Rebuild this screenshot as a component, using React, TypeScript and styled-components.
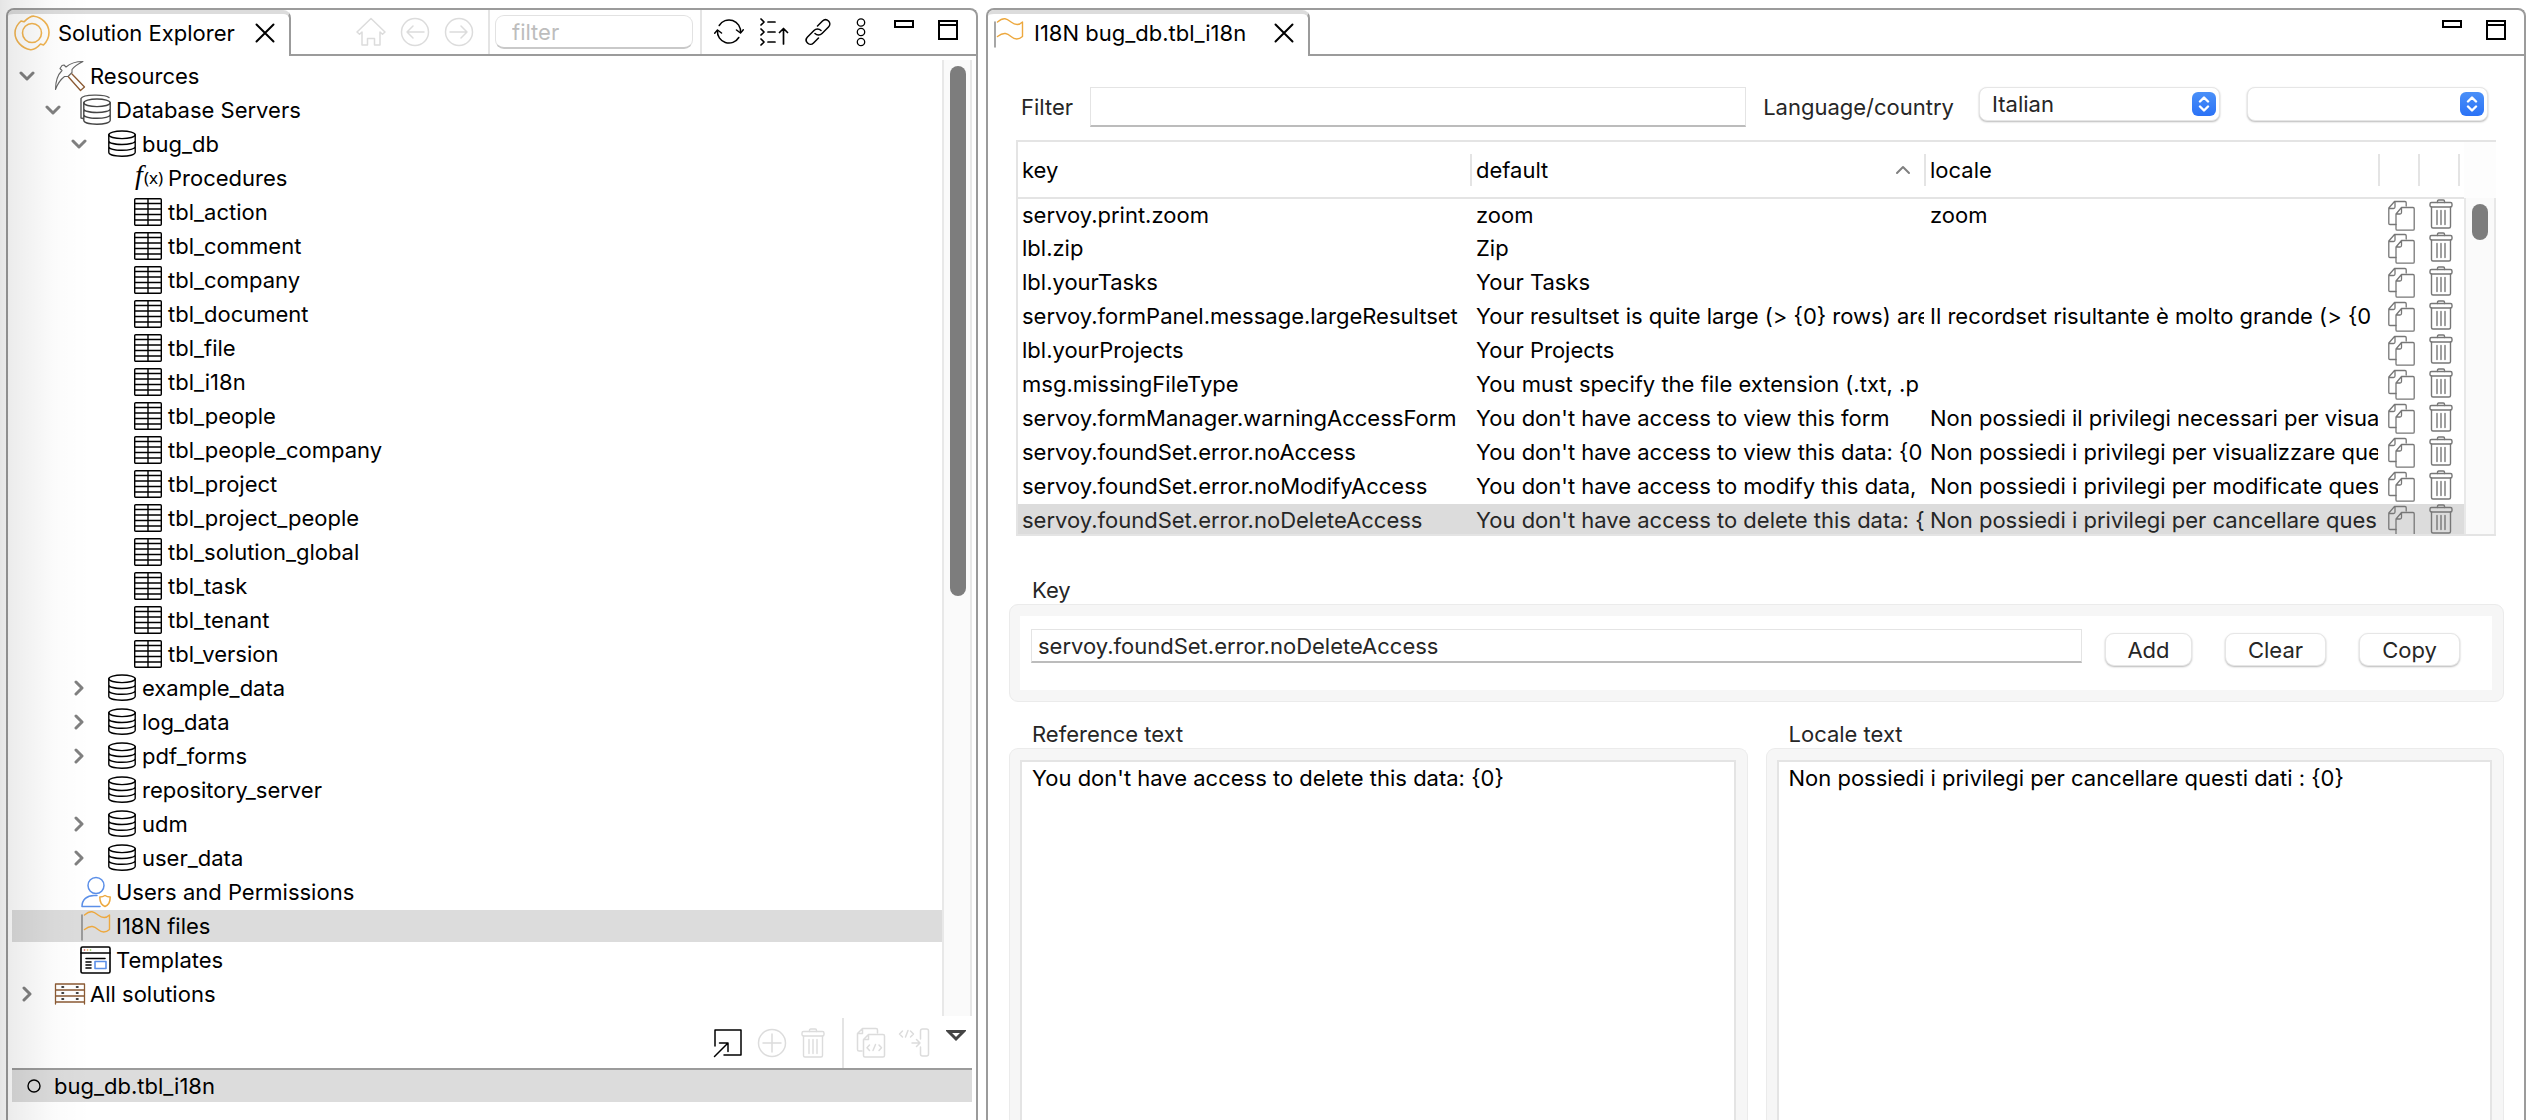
import React from "react";
import styled, { createGlobalStyle } from "styled-components";

const GlobalStyle = createGlobalStyle`
  *, *::before, *::after { box-sizing: border-box; }
  html, body { margin: 0; padding: 0; }
  body {
    background: #fff;
    color: #000;
    font: 400 22px/32px Inter, "Liberation Sans", sans-serif;
    overflow: hidden;
  }
  button, input, select, textarea { font: inherit; color: inherit; margin: 0; }
  button { padding: 0; border: 0; background: none; cursor: pointer; }
  svg { display: block; flex: none; }
`;

/* ---------- workbench frame ---------- */

const Workbench = styled.div`
  position: relative;
  height: 100vh;
  padding: 8px 4px 0 6px;
  display: grid;
  grid-template-columns: minmax(0, 972fr) minmax(0, 1540fr);
  gap: 8px;
`;

const EdgeShade = styled.div`
  position: absolute;
  inset: 0 auto 0 0;
  width: 90px;
  pointer-events: none;
  background: linear-gradient(to right, rgba(0, 0, 0, 0.1), rgba(0, 0, 0, 0.07) 14%, rgba(0, 0, 0, 0.015) 60%, rgba(0, 0, 0, 0));
`;

const View = styled.section`
  display: flex;
  flex-direction: column;
  min-width: 0;
  min-height: 0;
  border: 2px solid #9b9b9b;
  border-bottom: 0;
  border-radius: 8px 8px 0 0;
  background: #fff;
`;

const ViewHeader = styled.header`
  display: flex;
  flex: none;
  height: 46px;
`;

const Tab = styled.div<{ $gap: number }>`
  display: flex;
  align-items: center;
  gap: ${(p) => p.$gap}px;
  padding: 0 14px 5px 6px;
  border-top: 4px solid #dcdcdc;
  border-right: 2px solid #9b9b9b;
  border-radius: 6px 8px 0 0;
  white-space: nowrap;
`;

const TabClose = styled.button<{ $space: number }>`
  margin-left: ${(p) => p.$space}px;
`;

const HeaderTools = styled.div`
  flex: 1;
  display: flex;
  justify-content: flex-end;
  align-items: center;
  min-width: 0;
  border-bottom: 2px solid #9b9b9b;
`;

const ToolGroup = styled.div<{ $gap: number; $pad: string }>`
  display: flex;
  align-items: center;
  gap: ${(p) => p.$gap}px;
  padding: ${(p) => p.$pad};
`;

const Separator = styled.span`
  width: 2px;
  align-self: stretch;
  background: #e4e4e4;
`;

const SearchField = styled.input`
  width: 198px;
  height: 34px;
  margin: 0 7px 0 5px;
  padding: 0 16px;
  border: 1px solid #e2e2e2;
  border-bottom: 2px solid #c9c9c9;
  border-radius: 9px;
  background: #fff;
  outline: none;
  &::placeholder { color: #bdbdbd; opacity: 1; }
`;

const WindowButtons = styled.div`
  display: flex;
  align-items: flex-start;
  gap: 24px;
  height: 24px;
  padding-right: 18px;
`;

/* ---------- tree ---------- */

const TreeArea = styled.div`
  display: flex;
  flex: 1;
  min-height: 0;
  padding: 4px 4px 0 4px;
`;

const TreeList = styled.ul`
  flex: 1;
  min-width: 0;
  margin: 0;
  padding: 0;
  list-style: none;
`;

const TreeRow = styled.li<{ $depth: number; $selected?: boolean }>`
  display: flex;
  align-items: center;
  height: 32px;
  margin-bottom: 2px;
  padding-left: ${(p) => p.$depth * 26}px;
  background: ${(p) => (p.$selected ? "#dcdcdc" : "transparent")};
  white-space: nowrap;
`;

const Twisty = styled.span`
  width: 30px;
  display: flex;
  justify-content: center;
`;

const TreeIcon = styled.span`
  width: 32px;
  margin: 0 4px 0 12px;
  display: flex;
  justify-content: center;
`;

const ScrollTrack = styled.div<{ $width: number }>`
  flex: 1;
  width: ${(p) => p.$width}px;
  padding: 6px 6px 0;
  border: solid #e8e8e8;
  border-width: 0 2px;
  background: #fafafa;
`;

const ScrollThumb = styled.div<{ $length: number }>`
  width: 16px;
  height: ${(p) => p.$length}px;
  border-radius: 8px;
  background: #7d7d7d;
`;

const ScrollColumn = styled.div`
  display: flex;
  flex-direction: column;
`;

const ActionBar = styled.div`
  display: flex;
  justify-content: flex-end;
  align-items: center;
  flex: none;
  height: 54px;
  margin: 0 4px;
  padding: 2px 6px 0 0;
  border-bottom: 2px solid #9b9b9b;
`;

const MenuCaret = styled.button`
  align-self: flex-start;
  margin-top: 12px;
`;

const MemberList = styled.ul`
  flex: none;
  height: 50px;
  margin: 0 4px;
  padding: 0;
  list-style: none;
`;

const MemberRow = styled.li`
  display: flex;
  align-items: center;
  gap: 13px;
  height: 32px;
  padding-left: 15px;
  background: #dcdcdc;
`;

/* ---------- editor ---------- */

const EditorBody = styled.div`
  display: flex;
  flex-direction: column;
  flex: 1;
  min-height: 0;
  padding: 30px 20px 0 21px;
  color: #262626;
`;

const FilterBar = styled.div`
  display: flex;
  align-items: center;
  gap: 17px;
  height: 42px;
  margin: 0 16px 12px 12px;
`;

const FieldLabel = styled.label`
  flex: none;
`;

const TextField = styled.input<{ $height: number }>`
  flex: 1;
  min-width: 0;
  height: ${(p) => p.$height}px;
  padding: 0 6px;
  border: 1px solid #e4e4e4;
  border-bottom: 2px solid #bcbcbc;
  background: #fff;
  outline: none;
`;

const SelectPair = styled.div`
  flex: none;
  display: flex;
  gap: 27px;
  margin: 0 0 6px 8px;
`;

const SelectBox = styled.div`
  position: relative;
  width: 241px;
`;

const Select = styled.select`
  display: block;
  width: 100%;
  height: 34px;
  padding: 0 40px 0 12px;
  appearance: none;
  border: 1px solid #e6e6e6;
  border-radius: 8px;
  background: #fff;
  box-shadow: 0 1px 2px rgba(0, 0, 0, 0.28);
  outline: none;
`;

const Stepper = styled.span`
  position: absolute;
  top: 5px;
  right: 4px;
  width: 24px;
  height: 24px;
  border-radius: 6px;
  background: linear-gradient(#4a90f8, #2b72f6);
  display: flex;
  align-items: center;
  justify-content: center;
  pointer-events: none;
`;

const Grid = styled.div`
  display: flex;
  flex: none;
  height: 396px;
  margin: 0 8px 0 7px;
  border: 2px solid #e4e4e4;
  border-right: 0;
  overflow: hidden;
  color: #000;
`;

const Table = styled.table`
  flex: 1;
  width: 0;
  height: max-content;
  table-layout: fixed;
  border-collapse: collapse;
`;

const HeadCell = styled.th`
  height: 56px;
  padding: 0;
  border-bottom: 2px solid #e4e4e4;
  font-weight: 400;
  text-align: left;
`;

const HeadInner = styled.span<{ $inset?: boolean }>`
  display: flex;
  align-items: center;
  justify-content: space-between;
  height: 32px;
  margin-right: ${(p) => (p.$inset ? 4 : 0)}px;
  padding: 0 13px 0 4px;
  border-right: 2px solid #e4e4e4;
`;

const BodyRow = styled.tr<{ $selected?: boolean }>`
  height: 34px;
  background: ${(p) => (p.$selected ? "#dcdcdc" : "transparent")};
  color: ${(p) => (p.$selected ? "#262626" : "#000")};
`;

const TextCell = styled.td`
  padding: 0 0 0 4px;
  vertical-align: top;
  white-space: nowrap;
`;

const CellText = styled.div`
  margin-right: 2px;
  overflow: hidden;
  line-height: 32px;
`;

const IconCell = styled.td<{ $left: number }>`
  padding: 0 0 0 ${(p) => p.$left}px;
  vertical-align: top;
  line-height: 0;
`;

const ScrollCorner = styled.div`
  height: 56px;
  background: #fdfdfd;
`;

const Group = styled.fieldset<{ $fill?: boolean; $top?: number }>`
  display: flex;
  flex-direction: column;
  flex: ${(p) => (p.$fill ? "1 1 0" : "none")};
  min-width: 0;
  margin: ${(p) => p.$top ?? 0}px 0 0;
  padding: 0;
  border: 0;
`;

const GroupTitle = styled.legend`
  padding: 0 0 0 23px;
  line-height: 28px;
`;

const GroupFrame = styled.div<{ $open?: boolean }>`
  flex: 1;
  display: flex;
  padding: ${(p) => (p.$open ? "11px 11px 0 10px" : "11px 11px 11px 10px")};
  border: 1px solid #ebebeb;
  border-bottom-width: ${(p) => (p.$open ? 0 : 1)}px;
  border-radius: ${(p) => (p.$open ? "9px 9px 0 0" : "9px")};
  background: #f6f6f6;
`;

const KeyRow = styled.div`
  flex: 1;
  display: flex;
  align-items: flex-start;
  height: 74px;
  padding: 13px 32px 0 11px;
  background: #fff;
`;

const PushButtons = styled.div`
  display: flex;
  gap: 33px;
  margin: 4px 0 0 23px;
`;

const PushButton = styled.button<{ $width: number }>`
  width: ${(p) => p.$width}px;
  height: 33px;
  border: 1px solid #e6e6e6;
  border-radius: 9px;
  background: #fff;
  box-shadow: 0 1px 2px rgba(0, 0, 0, 0.28);
  line-height: 30px;
`;

const TextPair = styled.div`
  flex: 1;
  display: flex;
  gap: 18px;
  min-height: 0;
  margin-top: 18px;
`;

const TextArea = styled.textarea`
  flex: 1;
  min-width: 0;
  padding: 0 10px;
  border: 2px solid #e4e4e4;
  border-bottom: 0;
  background: #fff;
  color: #000;
  resize: none;
  outline: none;
`;

/* ---------- icons ---------- */

type IconProps = { w: number; h: number; color?: string; sw?: number; children: React.ReactNode };

const Icon = ({ w, h, color = "#000", sw = 1.5, children }: IconProps) => (
  <svg
    width={w}
    height={h}
    viewBox={`0 0 ${w} ${h}`}
    fill="none"
    stroke={color}
    strokeWidth={sw}
    strokeLinecap="round"
    strokeLinejoin="round"
    aria-hidden="true"
  >
    {children}
  </svg>
);

const PALE = "#dcdcdc";

const ServoyLogo = () => (
  <Icon w={36} h={36} color="#f2b552" sw={1.6}>
    <circle cx="18" cy="18" r="9.500" />
    <path d="M7 6l3 .8C14 3 16.500 .800 20 1.200c8 1 15 8 15 16.300 0 5-2 9-5.500 12.500l-3-1C23 33 20.500 35 16.500 34.700 8 33.500 1 26 1 18c0-4.500 2-8.500 6-12z" />
  </Icon>
);

const CloseIcon = () => (
  <Icon w={20} h={20} sw={2}>
    <path d="M1.500 1.500l17 17M18.500 1.500l-17 17" />
  </Icon>
);

const HomeIcon = () => (
  <Icon w={30} h={30} color={PALE} sw={1.5}>
    <path d="M15 1.500L1 15l2.500 2.300L6 15v13h5.500v-6.500h7V28H24V15l2.500 2.300L29 15z" />
  </Icon>
);

const BackIcon = () => (
  <Icon w={30} h={30} color={PALE} sw={1.5}>
    <circle cx="15" cy="15" r="13.500" />
    <path d="M24 15H7M13 9l-6 6 6 6" />
  </Icon>
);

const ForwardIcon = () => (
  <Icon w={30} h={30} color={PALE} sw={1.5}>
    <circle cx="15" cy="15" r="13.500" />
    <path d="M6 15h17M17 9l6 6-6 6" />
  </Icon>
);

const RefreshIcon = () => (
  <Icon w={30} h={30}>
    <path d="M5.200 8.500A11.500 11.500 0 0 1 26.500 15.500M24.800 20.500A11.500 11.500 0 0 1 3.500 13.500" />
    <path d="M22.500 13l4 3 2.800-3.200M.7 16.200l2.800-3.200 4 3" />
  </Icon>
);

const CollapseIcon = () => (
  <Icon w={30} h={30} sw={1.7}>
    <path d="M2 2l3 3-3 3M2 12l3 3-3 3M2 22l3 3-3 3M9 5h7M9 15h7M9 25h7M24.500 27V12M20.500 15.500l4-4 4 4" />
  </Icon>
);

const LinkIcon = () => (
  <Icon w={28} h={28}>
    <path d="M13.500 8l5-5c2-2 4.500-1.500 6 0s2 4 0 6l-6.500 6.500c-2 2-5 2-7 0" />
    <path d="M14.500 20l-5 5c-2 2-4.500 1.500-6 0s-2-4 0-6L10 12.500c2-2 5-2 7 0" />
  </Icon>
);

const DotsIcon = () => (
  <Icon w={10} h={30} sw={1.3}>
    <circle cx="5" cy="5.500" r="3.700" />
    <circle cx="5" cy="15" r="3.700" />
    <circle cx="5" cy="25" r="3.700" />
  </Icon>
);

const MinimizeIcon = () => (
  <svg width="20" height="8" fill="none" stroke="#000" strokeWidth="2" aria-hidden="true">
    <rect x="1" y="1" width="18" height="6" />
  </svg>
);

const MaximizeIcon = () => (
  <svg width="20" height="20" fill="none" stroke="#000" strokeWidth="2" aria-hidden="true">
    <path d="M1 1h18v18H1zM1 5h18" />
  </svg>
);

const ChevronDown = () => (
  <Icon w={16} h={10} color="#808080" sw={3}>
    <path d="M2 2l6 6 6-6" />
  </Icon>
);

const ChevronRight = () => (
  <Icon w={10} h={16} color="#808080" sw={3}>
    <path d="M2 2l6 6-6 6" />
  </Icon>
);

const PickaxeIcon = () => (
  <Icon w={32} h={32} color="#666" sw={1.1}>
    <path d="M1.500 29.500C1.500 22 3.500 15 8 10.500L6 8.500l2-3 2-.5 2 2C16 3.500 22 1.500 29 1.500c-5 2.500-9 5-11 8v3l-4 4h-3.500C6.500 19.500 3.500 24 1.500 29.500z" />
    <path stroke="#8b5a33" strokeWidth="1.300" d="M14.500 17l12 13.500 4-3.500L18 14" />
  </Icon>
);

const Cylinder = ({ color }: { color: string }) => (
  <g stroke={color}>
    <ellipse cx="14" cy="4.800" rx="13.200" ry="3.800" />
    <path d="M.8 4.800v17.500c0 5.200 26.400 5.200 26.400 0V4.800M.8 10.700c0 5 26.400 5 26.400 0M.8 16.500c0 5 26.400 5 26.400 0" />
  </g>
);

const DatabaseIcon = () => (
  <Icon w={28} h={28} sw={1.4}>
    <Cylinder color="#000" />
  </Icon>
);

const DatabasesIcon = () => (
  <Icon w={32} h={32} color="#555" sw={1.4}>
    <path d="M1 24V4.500C3 .2 25 .2 29 3.500M1 24l2 .5" />
    <g transform="translate(3 4)">
      <Cylinder color="#444" />
    </g>
  </Icon>
);

const FunctionIcon = () => (
  <svg width="32" height="32" overflow="visible" aria-hidden="true">
    <text x="3" y="22" fontFamily="Liberation Serif, serif" fontStyle="italic" fontSize="28">f</text>
    <text x="12" y="22" fontFamily="Noto Sans, sans-serif" fontSize="17">(x)</text>
  </svg>
);

const TableIcon = () => (
  <Icon w={28} h={28} sw={1.4}>
    <rect x=".7" y=".7" width="26.600" height="26.600" rx="1" />
    <path d="M1 5.500h26M1 11h26M1 16.500h26M1 22h26M14 1v26" />
  </Icon>
);

const UsersIcon = () => (
  <Icon w={30} h={32} color="#5b8fe8" sw={1.5}>
    <circle cx="15" cy="9.500" r="8" />
    <path d="M1 30.500c0-7 5-11 12-11h3M1 30.500h18" />
    <path stroke="#eda83e" d="M24 19.500c-1.500 1-3 1.500-5.200 1.500 0 5 1.200 8 5.200 9.500 4-1.500 5.200-4.500 5.200-9.500-2.200 0-3.700-.5-5.200-1.500z" />
  </Icon>
);

const FlagIcon = () => (
  <Icon w={30} h={30} color="#eda83e" sw={1.4}>
    <path d="M3.500 4C10-1.500 13 1 17 4s8 3.500 11.500 0v14.500c-4 3.500-8 3-11.500 0s-7-5-13.500 0" />
    <path stroke="#777" strokeWidth="1.300" d="M1 4v25" />
  </Icon>
);

const TemplatesIcon = () => (
  <Icon w={32} h={28} sw={1.6}>
    <rect x="1" y="1" width="29" height="26" rx="1.500" />
    <path d="M1 7h29M6 12.500h19M6 16h5M6 19h5M6 22h5" />
    <rect x="15" y="15.500" width="11" height="7" stroke="#5b8fe8" />
    <path stroke="#e0443e" d="M4.500 4h.1" />
    <path stroke="#eda83e" d="M7.500 4h.1" />
    <path stroke="#7bc043" d="M10.500 4h.1" />
  </Icon>
);

const SolutionsIcon = () => (
  <Icon w={32} h={22} color="#8b5a33" sw={1.3}>
    <path d="M1.500 21V1h29v20M1.500 7h29M1.500 13h29M1.500 19h29" />
    <path stroke="#000" strokeWidth="1.600" d="M8 4h1.500M22.500 4H24M8 10h1.500M22.500 10H24M8 16h1.500M22.500 16H24" />
  </Icon>
);

const OpenIcon = () => (
  <Icon w={30} h={30}>
    <path d="M2 18V2h26v25H11M1.500 28.500L15 15M6.500 15H15v8.500" />
  </Icon>
);

const AddCircleIcon = () => (
  <Icon w={30} h={30} color={PALE}>
    <circle cx="15" cy="15" r="13.500" />
    <path d="M15 6v18M6 15h18" />
  </Icon>
);

const TrashIcon = ({ color }: { color: string }) => (
  <Icon w={24} h={30} color={color} sw={1.4}>
    <path d="M8.500 3.500V2.300c0-.8.400-1.300 1.200-1.300h4.600c.8 0 1.200.5 1.200 1.300v1.200" />
    <rect x="1" y="3.500" width="22" height="4.500" rx="1.500" />
    <path d="M2.500 8v19.500c0 1 .5 1.500 1.500 1.500h16c1 0 1.500-.5 1.500-1.500V8M8 11.500v14M12 11.500v14M16 11.500v14" />
  </Icon>
);

const CopyIcon = () => (
  <Icon w={28} h={32} color="#777" sw={1.3}>
    <path d="M8 25.500H2c-.8 0-1.200-.4-1.200-1.200V9L6.500 2.500H17c.8 0 1.200.4 1.200 1.200V7M7 2.500V8c0 1-.4 1.500-1.500 1.500H1" />
    <path d="M8 15l5.500-6.500H25c.8 0 1.200.4 1.200 1.200V30c0 .8-.4 1.200-1.200 1.200H9.200C8.400 31.200 8 30.800 8 30zM13.500 9v4.500c0 1-.4 1.500-1.500 1.500H8" />
  </Icon>
);

const CopyCodeIcon = () => (
  <Icon w={30} h={32} color={PALE}>
    <path d="M6 24H3c-1 0-1.500-.5-1.500-1.500V6.500l5-5H20c1 0 1.500.5 1.500 1.500v3M6.500 2v4.500H2" />
    <path d="M7.500 12.500l5-5H27c1 0 1.500.5 1.500 1.500v19.500c0 1-.5 1.500-1.500 1.500H9c-1 0-1.500-.5-1.500-1.500zM12.500 8v4.500H8" />
    <path d="M13.500 18L11 20.700l2.500 2.700M23 18l2.500 2.700-2.500 2.700M19.500 17.500l-2.500 6" />
  </Icon>
);

const MoveCodeIcon = () => (
  <Icon w={32} h={32} color={PALE}>
    <path d="M4.500 4L1.500 7l3 3M12.500 4l3 3-3 3M10 3.500L7.500 10M14 16h8M18.500 12.500L22 16l-3.500 3.500" />
    <path d="M22.500 12V4c0-1.200.8-2 2-2h4c1.200 0 2 .8 2 2v23c0 1.200-.8 2-2 2h-4c-1.200 0-2-.8-2-2v-7" />
  </Icon>
);

const CaretIcon = () => (
  <svg width="20" height="12" fill="none" stroke="#444" strokeWidth="3" aria-hidden="true">
    <path d="M2.500 1.500h15L10 9z" />
  </svg>
);

const SortIcon = () => (
  <Icon w={16} h={10} color="#808080" sw={2}>
    <path d="M2 8l6-6 6 6" />
  </Icon>
);

const StepperIcon = () => (
  <Icon w={12} h={16} color="#fff" sw={2.4}>
    <path d="M2 5.500l4-4 4 4M2 10.500l4 4 4-4" />
  </Icon>
);

const RingIcon = () => (
  <Icon w={14} h={14} sw={1.4}>
    <circle cx="7" cy="7" r="6" />
  </Icon>
);

/* ---------- data ---------- */

type Node = { label: string; depth: number; icon: React.FC; state?: "open" | "closed"; selected?: boolean };

const tables = [
  "tbl_action", "tbl_comment", "tbl_company", "tbl_document", "tbl_file", "tbl_i18n", "tbl_people",
  "tbl_people_company", "tbl_project", "tbl_project_people", "tbl_solution_global", "tbl_task",
  "tbl_tenant", "tbl_version",
];

const nodes: Node[] = [
  { label: "Resources", depth: 0, icon: PickaxeIcon, state: "open" },
  { label: "Database Servers", depth: 1, icon: DatabasesIcon, state: "open" },
  { label: "bug_db", depth: 2, icon: DatabaseIcon, state: "open" },
  { label: "Procedures", depth: 3, icon: FunctionIcon },
  ...tables.map((label) => ({ label, depth: 3, icon: TableIcon })),
  { label: "example_data", depth: 2, icon: DatabaseIcon, state: "closed" },
  { label: "log_data", depth: 2, icon: DatabaseIcon, state: "closed" },
  { label: "pdf_forms", depth: 2, icon: DatabaseIcon, state: "closed" },
  { label: "repository_server", depth: 2, icon: DatabaseIcon },
  { label: "udm", depth: 2, icon: DatabaseIcon, state: "closed" },
  { label: "user_data", depth: 2, icon: DatabaseIcon, state: "closed" },
  { label: "Users and Permissions", depth: 1, icon: UsersIcon },
  { label: "I18N files", depth: 1, icon: FlagIcon, selected: true },
  { label: "Templates", depth: 1, icon: TemplatesIcon },
  { label: "All solutions", depth: 0, icon: SolutionsIcon, state: "closed" },
];

const messages: [string, string, string][] = [
  ["servoy.print.zoom", "zoom", "zoom"],
  ["lbl.zip", "Zip", ""],
  ["lbl.yourTasks", "Your Tasks", ""],
  ["servoy.formPanel.message.largeResultset", "Your resultset is quite large (> {0} rows) are", "Il recordset risultante è molto grande (> {0"],
  ["lbl.yourProjects", "Your Projects", ""],
  ["msg.missingFileType", "You must specify the file extension (.txt, .p", ""],
  ["servoy.formManager.warningAccessForm", "You don't have access to view this form", "Non possiedi il privilegi necessari per visua"],
  ["servoy.foundSet.error.noAccess", "You don't have access to view this data: {0", "Non possiedi i privilegi per visualizzare que"],
  ["servoy.foundSet.error.noModifyAccess", "You don't have access to modify this data,", "Non possiedi i privilegi per modificate ques"],
  ["servoy.foundSet.error.noDeleteAccess", "You don't have access to delete this data: {", "Non possiedi i privilegi per cancellare ques"],
];

/* ---------- views ---------- */

const WindowControls = () => (
  <WindowButtons>
    <button aria-label="Minimize"><MinimizeIcon /></button>
    <button aria-label="Maximize"><MaximizeIcon /></button>
  </WindowButtons>
);

const SolutionExplorer = () => (
  <View>
    <ViewHeader>
      <Tab $gap={8}>
        <ServoyLogo />
        Solution Explorer
        <TabClose $space={12} aria-label="Close Solution Explorer"><CloseIcon /></TabClose>
      </Tab>
      <HeaderTools>
        <ToolGroup $gap={14} $pad="0 14px 0 0">
          <button aria-label="Home"><HomeIcon /></button>
          <button aria-label="Back"><BackIcon /></button>
          <button aria-label="Forward"><ForwardIcon /></button>
        </ToolGroup>
        <Separator />
        <SearchField aria-label="Filter tree" placeholder="filter" />
        <Separator />
        <ToolGroup $gap={15} $pad="0 28px 0 12px">
          <button aria-label="Refresh"><RefreshIcon /></button>
          <button aria-label="Collapse all"><CollapseIcon /></button>
          <button aria-label="Link with editor"><LinkIcon /></button>
          <ToolGroup $gap={0} $pad="0 0 0 9px">
            <button aria-label="View menu"><DotsIcon /></button>
          </ToolGroup>
        </ToolGroup>
        <WindowControls />
      </HeaderTools>
    </ViewHeader>

    <TreeArea>
      <TreeList>
        {nodes.map(({ label, depth, icon: NodeIcon, state, selected }) => (
          <TreeRow key={label} $depth={depth} $selected={selected}>
            <Twisty>
              {state === "open" && <ChevronDown />}
              {state === "closed" && <ChevronRight />}
            </Twisty>
            <TreeIcon><NodeIcon /></TreeIcon>
            {label}
          </TreeRow>
        ))}
      </TreeList>
      <ScrollColumn>
        <ScrollTrack $width={30}>
          <ScrollThumb $length={530} />
        </ScrollTrack>
      </ScrollColumn>
    </TreeArea>

    <ActionBar>
      <ToolGroup $gap={14} $pad="0 17px 0 0">
        <button aria-label="Open"><OpenIcon /></button>
        <button aria-label="New"><AddCircleIcon /></button>
        <button aria-label="Delete"><TrashIcon color={PALE} /></button>
      </ToolGroup>
      <Separator />
      <ToolGroup $gap={12} $pad="0 16px 0 12px">
        <button aria-label="Copy code"><CopyCodeIcon /></button>
        <button aria-label="Move code"><MoveCodeIcon /></button>
      </ToolGroup>
      <MenuCaret aria-label="More actions"><CaretIcon /></MenuCaret>
    </ActionBar>
    <MemberList>
      <MemberRow>
        <RingIcon />
        bug_db.tbl_i18n
      </MemberRow>
    </MemberList>
  </View>
);

const I18nEditor = () => (
  <View>
    <ViewHeader>
      <Tab $gap={10}>
        <FlagIcon />
        I18N bug_db.tbl_i18n
        <TabClose $space={18} aria-label="Close editor"><CloseIcon /></TabClose>
      </Tab>
      <HeaderTools>
        <WindowControls />
      </HeaderTools>
    </ViewHeader>

    <EditorBody>
      <FilterBar>
        <FieldLabel htmlFor="filter">Filter</FieldLabel>
        <TextField id="filter" $height={40} />
        <FieldLabel htmlFor="language">Language/country</FieldLabel>
        <SelectPair>
          <SelectBox>
            <Select id="language" defaultValue="Italian">
              <option>Italian</option>
            </Select>
            <Stepper><StepperIcon /></Stepper>
          </SelectBox>
          <SelectBox>
            <Select aria-label="Country" />
            <Stepper><StepperIcon /></Stepper>
          </SelectBox>
        </SelectPair>
      </FilterBar>

      <Grid>
        <Table>
          <colgroup>
            <col />
            <col />
            <col />
            <col width="40" />
            <col width="44" />
          </colgroup>
          <thead>
            <tr>
              <HeadCell><HeadInner>key</HeadInner></HeadCell>
              <HeadCell><HeadInner>default<SortIcon /></HeadInner></HeadCell>
              <HeadCell><HeadInner>locale</HeadInner></HeadCell>
              <HeadCell><HeadInner /></HeadCell>
              <HeadCell><HeadInner $inset /></HeadCell>
            </tr>
          </thead>
          <tbody>
            {messages.map(([key, text, locale], i) => (
              <BodyRow key={key} $selected={i === messages.length - 1}>
                <TextCell><CellText>{key}</CellText></TextCell>
                <TextCell><CellText>{text}</CellText></TextCell>
                <TextCell><CellText>{locale}</CellText></TextCell>
                <IconCell $left={8}>
                  <button aria-label={`Copy ${key}`}><CopyIcon /></button>
                </IconCell>
                <IconCell $left={9}>
                  <button aria-label={`Delete ${key}`}><TrashIcon color="#777" /></button>
                </IconCell>
              </BodyRow>
            ))}
          </tbody>
        </Table>
        <ScrollColumn>
          <ScrollCorner />
          <ScrollTrack $width={32}>
            <ScrollThumb $length={36} />
          </ScrollTrack>
        </ScrollColumn>
      </Grid>

      <Group $top={40}>
        <GroupTitle>Key</GroupTitle>
        <GroupFrame>
          <KeyRow>
            <TextField aria-label="Key" $height={34} defaultValue="servoy.foundSet.error.noDeleteAccess" />
            <PushButtons>
              <PushButton $width={87}>Add</PushButton>
              <PushButton $width={101}>Clear</PushButton>
              <PushButton $width={101}>Copy</PushButton>
            </PushButtons>
          </KeyRow>
        </GroupFrame>
      </Group>

      <TextPair>
        <Group $fill>
          <GroupTitle>Reference text</GroupTitle>
          <GroupFrame $open>
            <TextArea aria-label="Reference text" defaultValue="You don't have access to delete this data: {0}" />
          </GroupFrame>
        </Group>
        <Group $fill>
          <GroupTitle>Locale text</GroupTitle>
          <GroupFrame $open>
            <TextArea aria-label="Locale text" defaultValue="Non possiedi i privilegi per cancellare questi dati : {0}" />
          </GroupFrame>
        </Group>
      </TextPair>
    </EditorBody>
  </View>
);

export default function App() {
  return (
    <>
      <GlobalStyle />
      <Workbench>
        <SolutionExplorer />
        <I18nEditor />
        <EdgeShade />
      </Workbench>
    </>
  );
}
